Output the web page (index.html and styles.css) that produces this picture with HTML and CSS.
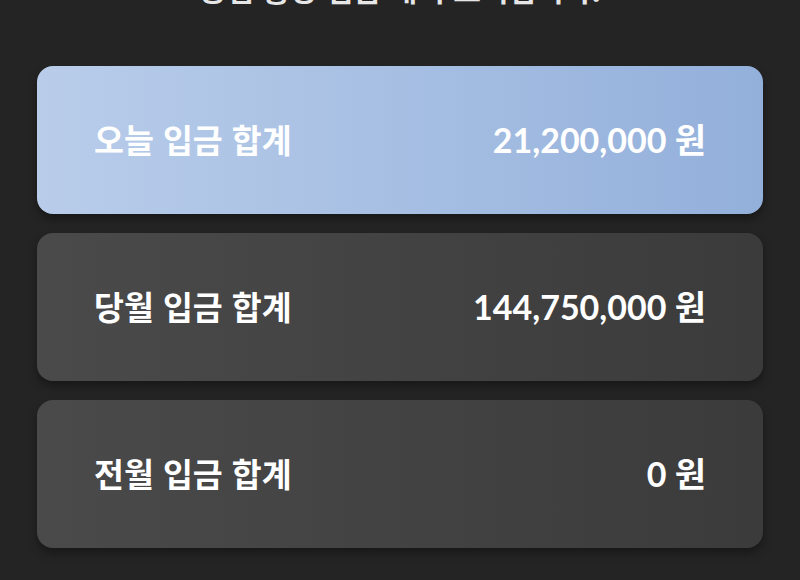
FILE: index.html
```html
<!DOCTYPE html>
<html lang="ko">
<head>
    <meta charset="UTF-8">
    <title>입금 합계</title>
    <link rel="stylesheet" href="styles.css">
</head>
<body>
    <div class="wrap">
        <h1 class="title">농협 통장 입금 내역 조회입니다.</h1>
        <div class="card today">
            <span class="label">오늘 입금 합계</span>
            <span class="amount">21,200,000 원</span>
        </div>
        <div class="card">
            <span class="label">당월 입금 합계</span>
            <span class="amount">144,750,000 원</span>
        </div>
        <div class="card">
            <span class="label">전월 입금 합계</span>
            <span class="amount">0 원</span>
        </div>
    </div>
</body>
</html>
```

FILE: styles.css
```css
*{padding:0;margin:0;box-sizing:border-box}
html,body{background:#242424;overflow:hidden}
body{font-family:Lato,"Noto Sans CJK KR",sans-serif;color:#fff}
.wrap{padding:0 37px}
.title{font-family:"Noto Sans CJK KR",sans-serif;font-size:30px;line-height:40px;font-weight:700;color:#e6e6e6;text-align:center;margin:-32px 0 58px}
.card{height:148px;display:flex;align-items:center;justify-content:space-between;padding:0 57px 4px 57px;border-radius:16px;margin-bottom:19px;background:linear-gradient(90deg,#4a4a4a,#3b3b3b);box-shadow:0 5px 10px rgba(0,0,0,.35)}
.card.today{background:linear-gradient(90deg,#b9cdea,#93b0db)}
.label{font-family:"Noto Sans CJK KR",sans-serif;font-size:32.5px;font-weight:700}
.amount{font-size:34px;font-weight:700}
```
